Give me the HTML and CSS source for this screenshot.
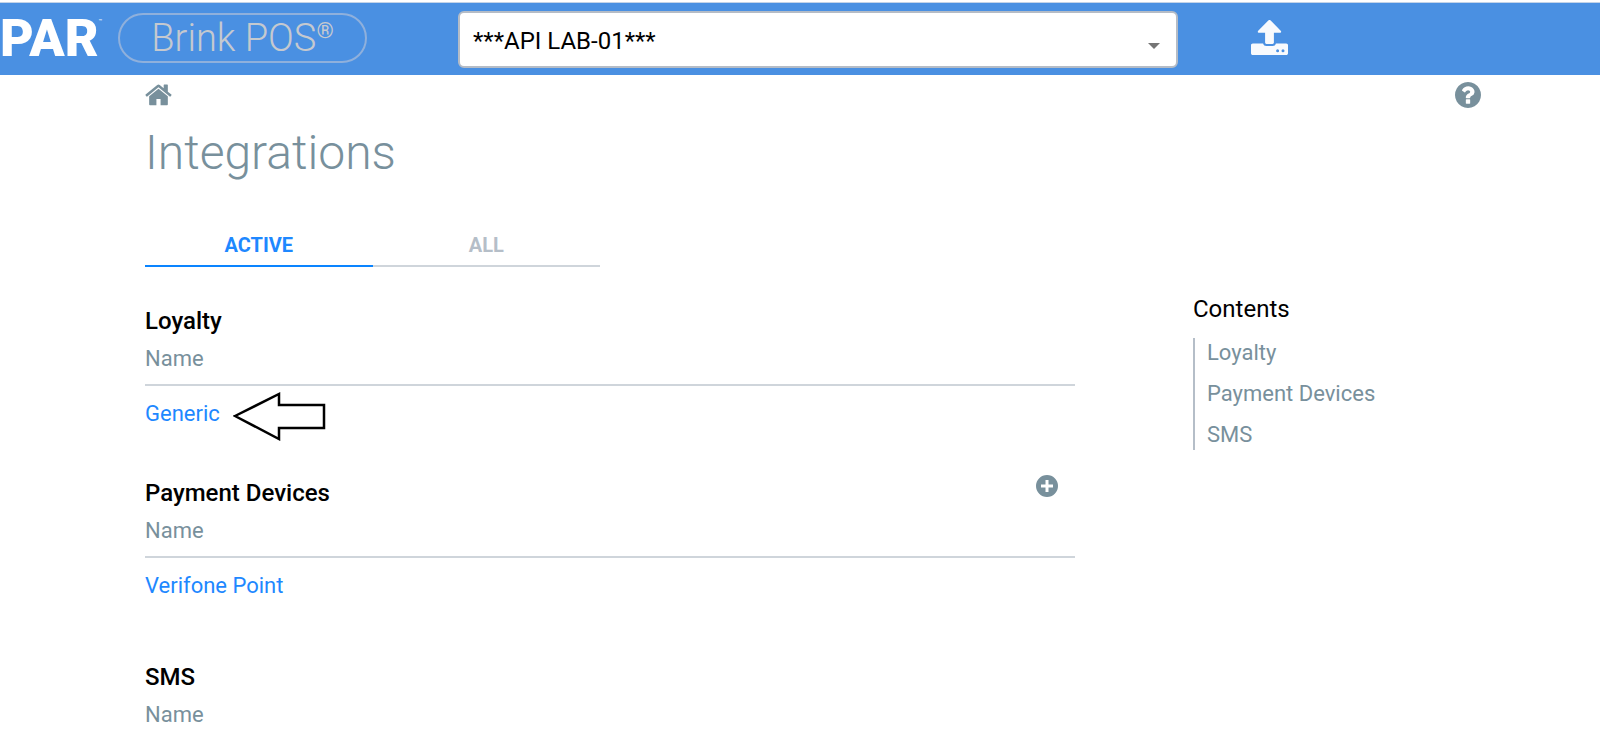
FILE: index.html
```
<!DOCTYPE html>
<html lang="en">
<head>
    <meta charset="UTF-8">
    <meta name="viewport" content="width=device-width, initial-scale=1.0">
    <title>Integrations</title>
    <link rel="stylesheet" href="styles.css">
</head>
<body>
    <header class="topbar">
        <a href="#" class="logo">PAR<span class="logo-tm">™</span></a>
        <a href="#" class="product">Brink POS<span class="product-mark">®</span></a>
        <div class="location">
            <select class="location-select" aria-label="Location">
                <option>***API LAB-01***</option>
            </select>
            <svg class="location-caret" viewBox="0 0 12 6" aria-hidden="true"><path d="M0 0h12L6 6z"/></svg>
        </div>
        <button type="button" class="icon-button upload" aria-label="Publish">
            <svg viewBox="0 0 37 36">
                <path fill="currentColor" d="M17.3.6a1.6 1.6 0 0 1 2.4 0l10 10.2c.9.9.4 2-.8 2h-6v9.8c0 .9-.6 1.4-1.4 1.4h-6c-.8 0-1.4-.5-1.4-1.4v-9.8H8c-1.200 0-1.600-1.100-.8-2z"/>
                <path fill="currentColor" fill-rule="evenodd" d="M1.800 23.500h10.300c.4 1.700 1.600 2.500 3.200 2.500h6.400c1.600 0 2.800-.8 3.200-2.500h10.300c1.100 0 1.800.7 1.800 1.800v8c0 1.100-.7 1.800-1.800 1.800H1.800c-1.100 0-1.800-.7-1.800-1.800v-8c0-1.100.7-1.800 1.800-1.800zM26.600 29.300a1.500 1.500 0 1 0 0 3 1.500 1.500 0 0 0 0-3zm5.400 0a1.500 1.500 0 1 0 0 3 1.500 1.500 0 0 0 0-3z"/>
            </svg>
        </button>
    </header>

    <main class="page">
        <div class="page-tools">
            <a href="#" class="home" aria-label="Home">
                <svg viewBox="0 0 1664 1312"><path fill="currentColor" d="M1408 768v480q0 26-19 45t-45 19H960V928H704v384H320q-26 0-45-19t-19-45V768q0-1 .5-3t.5-3l575-474 575 474q1 2 1 6zm223-69l-62 74q-8 9-21 11h-3q-13 0-21-7L832 200 140 777q-12 8-24 7-13-2-21-11l-62-74q-8-10-7-23.500t11-21.500L756 55q32-26 76-26t76 26l244 204V64q0-14 9-23t23-9h192q14 0 23 9t9 23v408l219 182q10 8 11 21.500t-7 23.500z"/></svg>
            </a>
            <button type="button" class="icon-button help" aria-label="Help">
                <svg viewBox="0 0 1536 1536"><path fill="currentColor" d="M896 1248v-192q0-14-9-23t-23-9H672q-14 0-23 9t-9 23v192q0 14 9 23t23 9h192q14 0 23-9t9-23zm256-672q0-88-55.500-163T958 297t-170-41q-243 0-371 213-15 24 8 42l132 100q7 6 19 6 16 0 25-12 53-68 86-92 34-24 86-24 48 0 85.500 26t37.500 59q0 38-20 61t-68 45q-63 28-115.500 86.500T640 892v36q0 14 9 23t23 9h192q14 0 23-9t9-23q0-19 21.500-49.500T972 829q32-18 49-28.500t46-35 44.500-48 28-60.500 12.500-81zm384 192q0 209-103 385.500T1153.500 1433 768 1536t-385.500-103T103 1153.500 0 768t103-385.500T382.500 103 768 0t385.500 103T1433 382.500 1536 768z"/></svg>
            </button>
        </div>

        <h1 class="page-title">Integrations</h1>

        <div class="tabs" role="tablist">
            <button type="button" class="tab active" role="tab" aria-selected="true">ACTIVE</button>
            <button type="button" class="tab" role="tab" aria-selected="false">ALL</button>
        </div>

        <div class="columns">
            <div class="sections">
                <section class="section" id="loyalty">
                    <h2 class="section-title">Loyalty</h2>
                    <table class="list">
                        <thead><tr><th>Name</th></tr></thead>
                        <tbody>
                            <tr>
                                <td>
                                    <span class="pointed">
                                        <a href="#">Generic</a>
                                        <svg class="pointer" viewBox="0 0 94 50" aria-hidden="true"><path d="M2 25L46 3v11h45v23H46v11z"/></svg>
                                    </span>
                                </td>
                            </tr>
                        </tbody>
                    </table>
                </section>

                <section class="section tall" id="payment-devices">
                    <div class="section-head">
                        <h2 class="section-title">Payment Devices</h2>
                        <button type="button" class="icon-button add" aria-label="Add payment device">
                            <svg viewBox="0 0 22 22"><path fill="currentColor" fill-rule="evenodd" d="M11 0a11 11 0 1 0 0 22 11 11 0 0 0 0-22zM9.500 5h3v4.500H17v3h-4.500V17h-3v-4.500H5v-3h4.500z"/></svg>
                        </button>
                    </div>
                    <table class="list">
                        <thead><tr><th>Name</th></tr></thead>
                        <tbody><tr><td><a href="#">Verifone Point</a></td></tr></tbody>
                    </table>
                </section>

                <section class="section" id="sms">
                    <h2 class="section-title">SMS</h2>
                    <table class="list">
                        <thead><tr><th>Name</th></tr></thead>
                    </table>
                </section>
            </div>

            <nav class="contents">
                <h3 class="contents-title">Contents</h3>
                <ul class="contents-list">
                    <li><a href="#loyalty">Loyalty</a></li>
                    <li><a href="#payment-devices">Payment Devices</a></li>
                    <li><a href="#sms">SMS</a></li>
                </ul>
            </nav>
        </div>
    </main>
</body>
</html>
```
FILE: styles.css
```
* {
    box-sizing: border-box;
}
html {
    height: 100%;
    overflow: hidden;
}
body {
    height: 100%;
    margin: 0;
    overflow: auto;
    scrollbar-width: none;
    background: #fff;
    color: #000;
    font-family: Roboto, "Liberation Sans", sans-serif;
    font-size: 22px;
}
a {
    color: #1e88ff;
    text-decoration: none;
}
svg {
    display: block;
}
.icon-button {
    padding: 0;
    border: 0;
    background: none;
    cursor: pointer;
}

/* top bar */
.topbar {
    display: flex;
    align-items: center;
    height: 73px;
    margin-top: 2px;
    border-top: 1px solid #c3d3e8;
    background: #4a90e2;
}
.logo {
    display: flex;
    flex: none;
    width: 118px;
    color: #fff;
    font-size: 52px;
    font-weight: 900;
    line-height: 56px;
}
.logo-tm {
    font-size: 6px;
    font-weight: 400;
    line-height: 20px;
}
.product {
    display: flex;
    flex: none;
    align-items: center;
    justify-content: center;
    width: 249px;
    height: 50px;
    margin-bottom: 2px;
    border: 2px solid #8fb0dc;
    border-radius: 25px;
    color: #c5c9cf;
    font-size: 38px;
    font-weight: 300;
}
.product-mark {
    align-self: flex-start;
    font-size: 22px;
    font-weight: 400;
    line-height: 32px;
}
.location {
    position: relative;
    width: 45%;
    margin-left: 91px;
}
.location-select {
    width: 100%;
    height: 57px;
    padding: 4px 40px 0 13px;
    border: 2px solid #b5bcc6;
    border-radius: 6px;
    appearance: none;
    background: #fff;
    color: #000;
    font: inherit;
    font-size: 24px;
}
.location-caret {
    position: absolute;
    top: 32px;
    right: 18px;
    width: 12px;
    fill: #757575;
    pointer-events: none;
}
.upload {
    width: 37px;
    margin-bottom: 2px;
    margin-left: 73px;
    color: #f8fafd;
}

/* page */
.page {
    padding: 0 119px 0 145px;
}
.page-tools {
    display: flex;
    align-items: center;
    justify-content: space-between;
    height: 40px;
    color: #78909c;
}
.home {
    width: 27px;
    color: inherit;
}
.help {
    width: 26px;
    color: inherit;
}
.page-title {
    margin: 8px 0 0;
    color: #78909c;
    font-size: 48px;
    font-weight: 300;
    line-height: 60px;
}
.tabs {
    display: flex;
    width: 455px;
    margin-top: 38px;
}
.tab {
    flex: 1;
    height: 46px;
    padding: 4px 0 0;
    border: 0;
    border-bottom: 2px solid #cfd5db;
    background: none;
    color: #b5bec8;
    font: inherit;
    font-size: 20px;
    font-weight: 700;
}
.tab.active {
    border-color: #0a84ff;
    color: #1e88ff;
}

/* integrations on the left, contents on the right */
.columns {
    display: grid;
    grid-template-columns: 1fr 288px;
    gap: 118px;
    padding-top: 35px;
}
.section {
    margin-bottom: 33px;
}
.section.tall {
    margin-bottom: 45px;
}
.section:last-child {
    margin-bottom: 0;
}
.section-head {
    display: flex;
    justify-content: space-between;
    padding-right: 17px;
}
.section-title {
    margin: 0;
    font-size: 24px;
    font-weight: 500;
    line-height: 38px;
}
.add {
    align-self: flex-start;
    width: 22px;
    padding-top: 1px;
    color: #78909c;
}
.list {
    width: 100%;
    border-collapse: collapse;
}
.list th {
    padding: 0 0 6px;
    border-bottom: 2px solid #cfd5db;
    color: #78909c;
    font-weight: 400;
    line-height: 38px;
    text-align: left;
}
.list td {
    padding: 0;
    line-height: 55px;
}
.pointed {
    position: relative;
    display: inline-block;
}
.pointer {
    position: absolute;
    top: 5px;
    left: 88px;
    width: 94px;
    fill: #fff;
    stroke: #000;
    stroke-width: 2.5;
}
.contents-title {
    margin: -8px 0 0;
    font-size: 24px;
    font-weight: 400;
    line-height: 30px;
}
.contents-list {
    margin: 14px 0 0;
    padding: 0 0 0 12px;
    border-left: 2px solid #b5bec8;
    list-style: none;
}
.contents-list li {
    line-height: 30px;
}
.contents-list li + li {
    margin-top: 11px;
}
.contents-list a {
    color: #78909c;
}
```
